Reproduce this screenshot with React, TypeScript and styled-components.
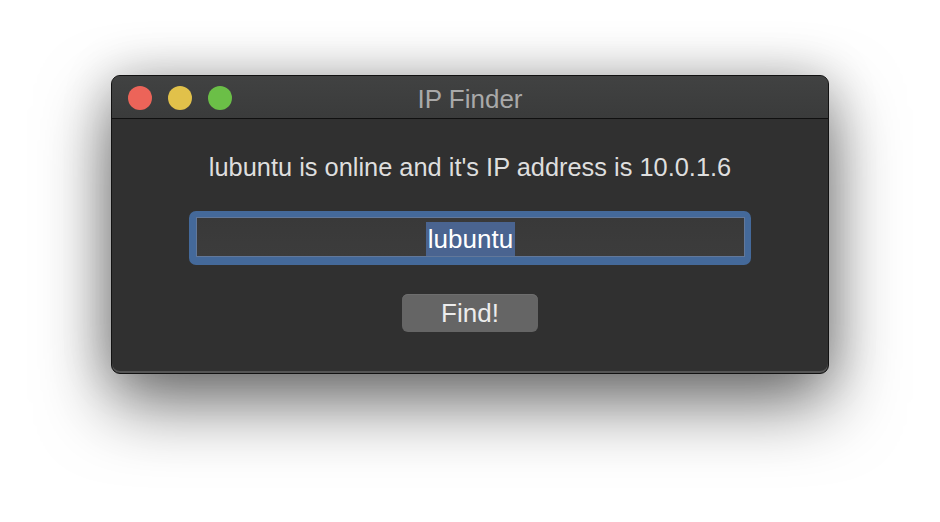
import React from "react";
import styled, { createGlobalStyle } from "styled-components";

const GlobalStyle = createGlobalStyle`
  html, body {
    margin: 0;
    padding: 0;
    background: #ffffff;
  }
  * { box-sizing: border-box; }
`;

const Stage = styled.div`
  width: 940px;
  height: 522px;
  display: flex;
  justify-content: center;
  align-items: flex-start;
  padding-top: 75px;
  background: #ffffff;
  overflow: hidden;
  font-family: "Liberation Sans", Arial, Helvetica, sans-serif;
`;

const Window = styled.div`
  width: 718px;
  height: 299px;
  border: 1px solid #121212;
  border-radius: 9px;
  background: #303030;
  overflow: hidden;
  display: flex;
  flex-direction: column;
  box-shadow:
    inset 0 -2px 0 #555555,
    0 30px 70px rgba(0, 0, 0, 0.55),
    0 0 50px rgba(0, 0, 0, 0.2);
`;

const TitleBar = styled.div`
  height: 43px;
  flex: none;
  display: grid;
  grid-template-columns: 1fr auto 1fr;
  align-items: center;
  background: linear-gradient(#414242, #3a3b3b);
  border-bottom: 1px solid #101010;
`;

const Lights = styled.div`
  display: flex;
  gap: 16px;
  padding-left: 16px;
  padding-top: 1px;
`;

const Light = styled.span<{ $color: string }>`
  width: 24px;
  height: 24px;
  border-radius: 50%;
  background: ${(p) => p.$color};
`;

const Title = styled.div`
  font-size: 26px;
  color: #a9a9a9;
  margin-top: 4px;
`;

const Content = styled.div`
  flex: 1;
  display: flex;
  flex-direction: column;
  align-items: center;
  padding-top: 33px;
`;

const Message = styled.div`
  font-size: 25.4px;
  line-height: 30px;
  color: #dedede;
`;

const FocusRing = styled.div`
  margin-top: 29px;
  width: 562px;
  height: 54px;
  border-radius: 7px;
  background: #44699a;
  padding: 6px 6px 8px 7px;
  display: flex;
`;

const Field = styled.div`
  flex: 1;
  border: 1px solid #62789a;
  background: linear-gradient(#393939, #3c3c3c);
  display: flex;
  justify-content: center;
  align-items: flex-start;
  padding-top: 4px;
`;

const Selected = styled.span`
  background: #4a6490;
  color: #ffffff;
  font-size: 26px;
  line-height: 34px;
  height: 34px;
  padding: 0 2px;
`;

const Button = styled.button`
  margin-top: 29px;
  width: 136px;
  height: 38px;
  border: none;
  border-radius: 6px;
  background: #656565;
  box-shadow: inset 0 1px 0 #6e6e6e;
  color: #ececec;
  font-family: inherit;
  font-size: 26px;
  line-height: 38px;
  padding: 0;
  cursor: default;
`;

export default function App() {
  return (
    <>
      <GlobalStyle />
      <Stage>
        <Window>
          <TitleBar>
            <Lights>
              <Light $color="#ec6459" />
              <Light $color="#e1c14a" />
              <Light $color="#6bbf47" />
            </Lights>
            <Title>IP Finder</Title>
            <div />
          </TitleBar>
          <Content>
            <Message>lubuntu is online and it's IP address is 10.0.1.6</Message>
            <FocusRing>
              <Field>
                <Selected>lubuntu</Selected>
              </Field>
            </FocusRing>
            <Button>Find!</Button>
          </Content>
        </Window>
      </Stage>
    </>
  );
}
